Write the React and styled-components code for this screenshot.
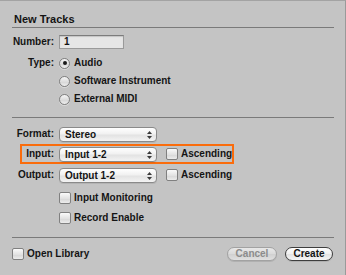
import styled, { createGlobalStyle } from "styled-components"

const GlobalStyle = createGlobalStyle`
  html, body {
    margin: 0;
    padding: 0;
    background: #c4c4c4;
  }
  body {
    font-family: "Liberation Sans", Arial, sans-serif;
  }
`

const Dialog = styled.div`
  box-sizing: border-box;
  width: 346px;
  height: 275px;
  background: #c4c4c4;
  border-top: 1px solid #a3a3a3;
  border-right: 1px solid #9a9a9a;
  padding: 11px 11px 0 12px;
  color: #141414;
  font-size: 10px;
  font-weight: bold;
`

const Title = styled.h1`
  margin: 0;
  padding-left: 2px;
  font-size: 11px;
  line-height: 14px;
  font-weight: bold;
`

const Divider = styled.div`
  height: 1px;
  background: #7a7a7a;
  margin-top: ${(p) => p.$top}px;
`

const Row = styled.div`
  position: relative;
  display: flex;
  align-items: center;
  height: ${(p) => p.$h}px;
  margin-top: ${(p) => p.$top || 0}px;
  line-height: 12px;
  white-space: nowrap;

  ${(p) =>
    p.$highlight &&
    `
    &::before {
      content: "";
      position: absolute;
      left: 8px;
      top: 0;
      width: 214px;
      height: 20px;
      box-sizing: border-box;
      border: 2px solid #fa6c0c;
      pointer-events: none;
    }
  `}
`

const Label = styled.span`
  flex: none;
  width: 42px;
  margin-right: 5px;
  text-align: right;
`

const TextField = styled.div`
  box-sizing: border-box;
  width: 65px;
  height: 14px;
  padding-left: 4px;
  background: #e6e6e6;
  border: 1px solid #9a9a9a;
  border-top-color: #7c7c7c;
  box-shadow: inset 0 1px 1px rgba(0, 0, 0, 0.15);
  line-height: 12px;
`

const RadioDot = styled.span`
  box-sizing: border-box;
  flex: none;
  width: 11px;
  height: 11px;
  border-radius: 50%;
  border: 1px solid #7f7f7f;
  background: linear-gradient(#f6f6f6, #d9d9d9 60%, #eeeeee);
  box-shadow: 0 1px 0 rgba(255, 255, 255, 0.35);
  display: flex;
  align-items: center;
  justify-content: center;
  margin-right: 4px;

  &::after {
    content: "";
    width: 4px;
    height: 4px;
    border-radius: 50%;
    background: ${(p) => (p.$on ? "#1a1a1a" : "transparent")};
  }
`

const Box = styled.span`
  box-sizing: border-box;
  flex: none;
  width: 12px;
  height: 12px;
  border-radius: 2px;
  border: 1px solid #808080;
  background: linear-gradient(#fafafa, #e2e2e2 55%, #d6d6d6 56%, #ececec);
  margin-left: ${(p) => p.$left || 0}px;
  margin-right: 3px;
`

const Popup = styled.div`
  box-sizing: border-box;
  position: relative;
  flex: none;
  width: 98px;
  height: 15px;
  padding-left: 5px;
  border: 1px solid #8a8a8a;
  border-radius: 4px;
  background: linear-gradient(#ffffff, #f1f1f1 45%, #e3e3e3 55%, #f3f3f3);
  box-shadow: 0 1px 0 rgba(0, 0, 0, 0.08);
  line-height: 13px;
  display: flex;
  align-items: center;
`

const Arrows = styled.svg`
  position: absolute;
  right: 4px;
  top: 3px;
`

const Footer = styled.div`
  display: flex;
  align-items: center;
  justify-content: space-between;
  height: 17px;
  margin-top: 7px;
  padding-right: 1px;
`

const Check = styled.span`
  display: flex;
  align-items: center;
`

const Buttons = styled.div`
  display: flex;
  gap: 8px;
`

const Button = styled.span`
  box-sizing: border-box;
  width: ${(p) => p.$w}px;
  height: 14px;
  border-radius: 7px;
  border: 1px solid ${(p) => (p.$disabled ? "#a2a2a2" : "#3e3e3e")};
  background: ${(p) =>
    p.$disabled
      ? "linear-gradient(#e8e8e8, #dadada 50%, #d0d0d0 51%, #e0e0e0)"
      : "linear-gradient(#ffffff, #f0f0f0 50%, #e2e2e2 51%, #f6f6f6)"};
  color: ${(p) => (p.$disabled ? "#8c8c8c" : "#141414")};
  text-align: center;
  line-height: 12px;
  box-shadow: 0 1px 0 rgba(0, 0, 0, 0.1);
`

const PopupButton = ({ children }) => (
  <Popup>
    {children}
    <Arrows width="5" height="8" viewBox="0 0 5 8">
      <path d="M2.5 0 L5 3 L0 3 Z" fill="#3a3a3a" />
      <path d="M0 5 L5 5 L2.5 8 Z" fill="#3a3a3a" />
    </Arrows>
  </Popup>
)

export default function App() {
  return (
    <>
      <GlobalStyle />
      <Dialog>
        <Title>New Tracks</Title>
        <Divider $top={1} />

        <Row $h={16} $top={6}>
          <Label>Number:</Label>
          <TextField>1</TextField>
        </Row>
        <Row $h={18} $top={4}>
          <Label>Type:</Label>
          <RadioDot $on />
          Audio
        </Row>
        <Row $h={18}>
          <Label />
          <RadioDot />
          Software Instrument
        </Row>
        <Row $h={18}>
          <Label />
          <RadioDot />
          External MIDI
        </Row>

        <Divider $top={9} />

        <Row $h={20} $top={6}>
          <Label>Format:</Label>
          <PopupButton>Stereo</PopupButton>
        </Row>
        <Row $h={20} $highlight>
          <Label>Input:</Label>
          <PopupButton>Input 1-2</PopupButton>
          <Box $left={9} />
          Ascending
        </Row>
        <Row $h={20} $top={1}>
          <Label>Output:</Label>
          <PopupButton>Output 1-2</PopupButton>
          <Box $left={9} />
          Ascending
        </Row>
        <Row $h={20} $top={3}>
          <Label />
          <Box />
          Input Monitoring
        </Row>
        <Row $h={20}>
          <Label />
          <Box />
          Record Enable
        </Row>

        <Divider $top={9} />

        <Footer>
          <Check>
            <Box />
            Open Library
          </Check>
          <Buttons>
            <Button $w={50} $disabled>
              Cancel
            </Button>
            <Button $w={48}>Create</Button>
          </Buttons>
        </Footer>
      </Dialog>
    </>
  )
}
